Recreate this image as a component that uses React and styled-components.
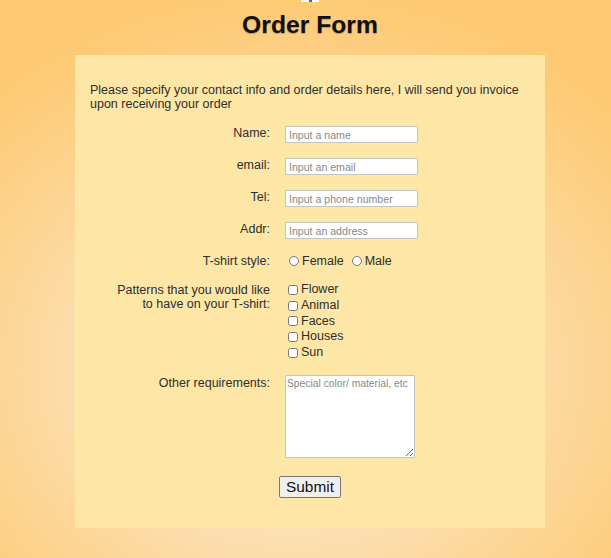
import React from "react";
import styled, { createGlobalStyle } from "styled-components";

const GlobalStyle = createGlobalStyle`
  html, body {
    margin: 0;
    padding: 0;
  }
  body {
    font-family: "Liberation Sans", Arial, sans-serif;
    color: #2e2e2e;
    min-height: 100vh;
    background: radial-gradient(ellipse 75% 70% at 48% 66%, #fbf0e0 0%, #fbe3bd 35%, #fdd38e 70%, #fdc86f 100%);
  }
`;

const Page = styled.div`
  width: 470px;
  margin-left: 75px;
  min-height: 558px;
`;

// little cut-off picture at the very top
const TopMark = styled.div`
  width: 18px;
  height: 2px;
  margin: 0 auto;
  background: #fff;
  display: flex;
  justify-content: center;
  > span {
    width: 3px;
    background: #1a73e8;
  }
`;

const Title = styled.h1`
  margin: 8.5px 0 16.5px;
  font-size: 24.7px;
  line-height: 28px;
  font-weight: bold;
  text-align: center;
  color: #111;
  text-shadow: 0 1px 1px rgba(0, 0, 0, 0.25);
`;

const Panel = styled.div`
  box-sizing: border-box;
  padding: 28px 15px 30px;
  background: #fee6a6;
`;

const Intro = styled.p`
  margin: 0 0 15px;
  font-size: 12.5px;
  line-height: 14px;
`;

const Form = styled.form`
  display: flex;
  flex-direction: column;
  gap: 15px;
`;

const Row = styled.div`
  display: grid;
  grid-template-columns: 160px 1fr;
  column-gap: 15px;
  padding-left: 20px;
  align-items: start;
  margin-top: ${props => props.$top ? `${props.$top}px` : "0"};
`;

const Label = styled.label`
  text-align: right;
  font-size: 12.5px;
  line-height: 14px;
  padding-top: ${props => props.$pad ? `${props.$pad}px` : "0"};
`;

const TextInput = styled.input`
  box-sizing: border-box;
  width: 133px;
  height: 17px;
  padding: 0 3px;
  border: 1px solid #c4c4c4;
  border-radius: 1px;
  background: #fff;
  font-family: "Liberation Sans", Arial, sans-serif;
  font-size: 10.6px;
  outline: none;
  &::placeholder {
    color: #8a8a8a;
  }
`;

const Options = styled.div`
  display: flex;
  flex-direction: ${props => props.$column ? "column" : "row"};
  align-items: ${props => props.$column ? "flex-start" : "center"};
  gap: ${props => props.$column ? "0" : "4px"};
`;

const Option = styled.label`
  display: flex;
  align-items: center;
  font-size: 12.5px;
  line-height: ${props => props.$tall ? "15.75px" : "14px"};
  input {
    width: 10px;
    height: 10px;
    margin: 0 3px 0 ${props => props.$round ? "4px" : "3px"};
  }
`;

const TextArea = styled.textarea`
  box-sizing: border-box;
  width: 130px;
  height: 83px;
  padding: 2px 1px;
  border: 1px solid #c4c4c4;
  border-radius: 1px;
  background: #fff;
  font-family: "Liberation Sans", Arial, sans-serif;
  font-size: 10.3px;
  outline: none;
  &::placeholder {
    color: #8a8a8a;
  }
`;

const Actions = styled.div`
  display: flex;
  justify-content: center;
  margin-top: 3px;
`;

const Submit = styled.button`
  height: 22px;
  padding: 0 6px;
  border: 1px solid #767676;
  border-radius: 2px;
  background: #efefef;
  color: #111;
  font-family: "Liberation Sans", Arial, sans-serif;
  font-size: 15.4px;
  line-height: 18px;
`;

const patterns = ["Flower", "Animal", "Faces", "Houses", "Sun"];

export default function App() {
  return (
    <>
      <GlobalStyle />
      <Page>
        <TopMark><span /></TopMark>
        <Title>Order Form</Title>
        <Panel>
          <Intro>
            Please specify your contact info and order details here, I will send you invoice
            upon receiving your order
          </Intro>
          <Form onSubmit={e => e.preventDefault()}>
            <Row>
              <Label>Name:</Label>
              <TextInput placeholder="Input a name" />
            </Row>
            <Row>
              <Label>email:</Label>
              <TextInput placeholder="Input an email" />
            </Row>
            <Row>
              <Label>Tel:</Label>
              <TextInput placeholder="Input a phone number" />
            </Row>
            <Row>
              <Label>Addr:</Label>
              <TextInput placeholder="Input an address" />
            </Row>
            <Row>
              <Label>T-shirt style:</Label>
              <Options>
                <Option $round><input type="radio" name="style" />Female</Option>
                <Option $round><input type="radio" name="style" />Male</Option>
              </Options>
            </Row>
            <Row $top={-1}>
              <Label $pad={1}>Patterns that you would like to have on your T-shirt:</Label>
              <Options $column>
                {patterns.map(p => (
                  <Option key={p} $tall><input type="checkbox" />{p}</Option>
                ))}
              </Options>
            </Row>
            <Row $top={-1}>
              <Label $pad={1}>Other requirements:</Label>
              <TextArea placeholder="Special color/ material, etc" />
            </Row>
            <Actions>
              <Submit type="submit">Submit</Submit>
            </Actions>
          </Form>
        </Panel>
      </Page>
    </>
  );
}
